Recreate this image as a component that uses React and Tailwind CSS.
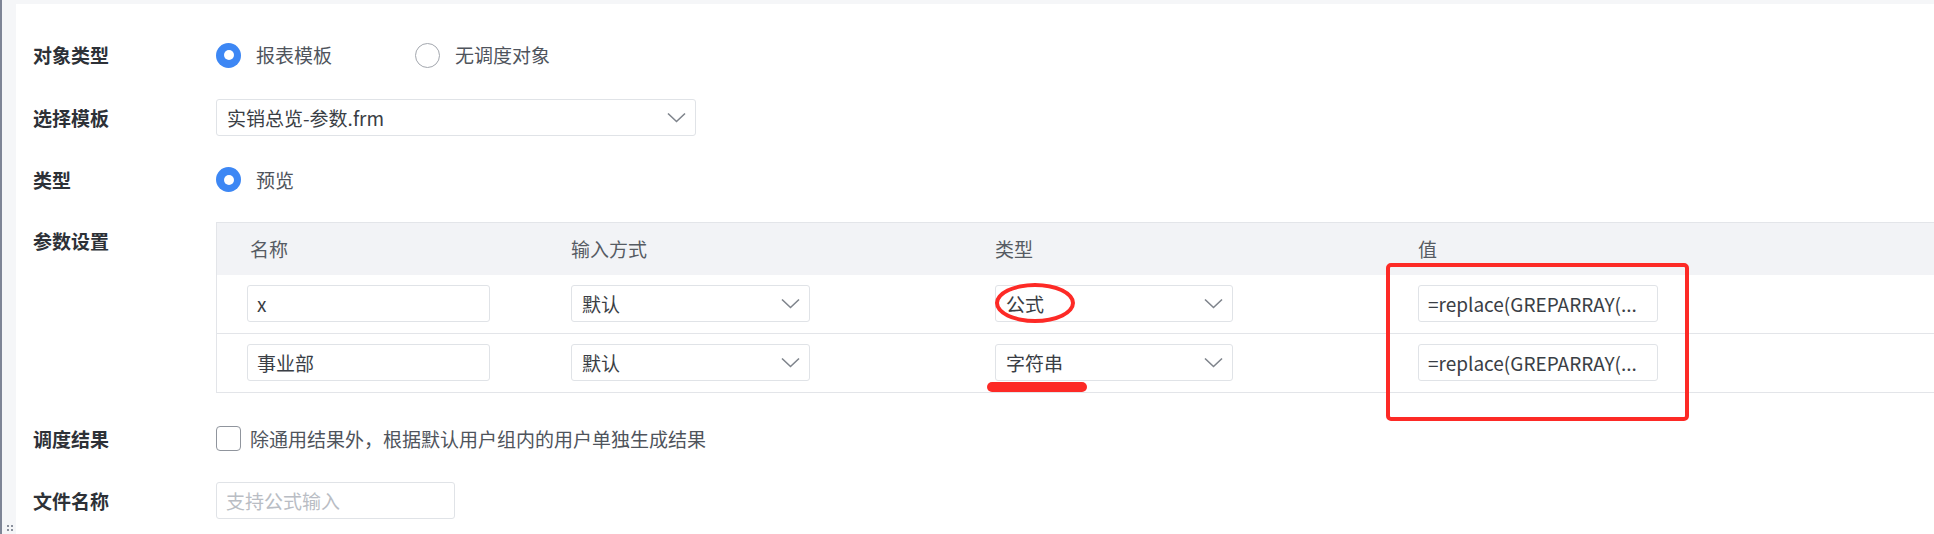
import { useState } from "react"

const font = { fontFamily: '"Noto Sans CJK SC", "Liberation Sans", sans-serif' }

const Chevron = () => (
    <svg width="19" height="11" viewBox="0 0 19 11" fill="none">
        <path d="M1 1.5 L9.5 9.5 L18 1.5" stroke="#7f848c" strokeWidth="1.6" />
    </svg>
)

const Radio = ({ checked, label }) => (
    <div className="flex items-center">
        {
            checked
                ? (
                    <div className="w-[25px] h-[25px] rounded-full bg-[#3d87f4] flex items-center justify-center">
                        <div className="w-[10px] h-[10px] rounded-full bg-white" />
                    </div>
                )
                : <div className="w-[25px] h-[25px] rounded-full border-[1.5px] border-[#a3a7ae] bg-white" />
        }
        <span className="ml-[15px] text-[19px] leading-[24px] text-[#4f545c]">{label}</span>
    </div>
)

const Select = ({ value, className }) => (
    <div className={"h-[37px] border border-[#e0e3e7] rounded-[3px] bg-white flex items-center justify-between pl-[10px] pr-[9px] " + className}>
        <span className="text-[19px] leading-[24px] text-[#3a3e45]">{value}</span>
        <Chevron />
    </div>
)

const Input = ({ value, placeholder, className }) => (
    <div className={"h-[37px] border border-[#e0e3e7] rounded-[3px] bg-white flex items-center px-[9px] " + className}>
        {
            value
                ? <span className="text-[19px] leading-[24px] text-[#3a3e45] whitespace-nowrap">{value}</span>
                : <span className="text-[19px] leading-[24px] text-[#b9bdc4]">{placeholder}</span>
        }
    </div>
)

const Label = ({ children, className }) => (
    <div className={"w-[200px] shrink-0 pl-[17px] text-[19px] leading-[24px] font-semibold text-[#2d3137] " + (className || "")}>
        {children}
    </div>
)

const params = [
    { name: "x", mode: "默认", type: "公式", value: "=replace(GREPARRAY(..." },
    { name: "事业部", mode: "默认", type: "字符串", value: "=replace(GREPARRAY(..." },
]

const ParamTable = () => (
    <div className="relative flex-1 border-l border-t border-[#e3e5e9]">
        <div className="grid grid-cols-[324px_424px_423px_1fr] h-[52px] bg-[#f2f3f6] items-center text-[19px] leading-[24px] text-[#565b63]">
            <div className="pl-[33px]">名称</div>
            <div className="pl-[30px]">输入方式</div>
            <div className="pl-[30px]">类型</div>
            <div className="pl-[30px]">值</div>
        </div>
        {params.map(p => (
            <div key={p.name} className="grid grid-cols-[324px_424px_423px_1fr] h-[59px] pt-[10px] border-b border-[#e3e5e9]">
                <div className="pl-[30px]"><Input value={p.name} className="w-[243px]" /></div>
                <div className="pl-[30px]"><Select value={p.mode} className="w-[239px]" /></div>
                <div className="pl-[30px]"><Select value={p.type} className="w-[238px]" /></div>
                <div className="pl-[30px]"><Input value={p.value} className="w-[240px]" /></div>
            </div>
        ))}

        {/* red annotations */}
        <div className="absolute left-[778px] top-[60px] w-[80px] h-[40px] rounded-[50%] border-[4px] border-[#fd2a26]" />
        <div className="absolute left-[770px] top-[159px] w-[100px] h-[10px] rounded-full bg-[#fd2a26]" />
        <div className="absolute left-[1169px] top-[40px] w-[303px] h-[158px] rounded-[5px] border-[4px] border-[#fd2a26]" />
    </div>
)

export default function App() {
    const [objType] = useState("template")

    return (
        <div style={font} className="w-[1934px] h-[534px] overflow-hidden bg-[#f5f6f8] border-l-2 border-[#7e8596] pt-[4px] pl-[14px] flex relative">
            <div className="flex-1 bg-white flex flex-col pt-[32px]">
                <div className="flex items-center h-[38px]">
                    <Label>对象类型</Label>
                    <div className="flex items-center gap-[83px]">
                        <Radio checked={objType === "template"} label="报表模板" />
                        <Radio checked={objType === "none"} label="无调度对象" />
                    </div>
                </div>

                <div className="flex items-center mt-[25px] h-[37px]">
                    <Label>选择模板</Label>
                    <Select value="实销总览-参数.frm" className="w-[480px]" />
                </div>

                <div className="flex items-center mt-[25px] h-[37px]">
                    <Label>类型</Label>
                    <Radio checked label="预览" />
                </div>

                <div className="flex mt-[24px]">
                    <Label className="pt-[7px]">参数设置</Label>
                    <ParamTable />
                </div>

                <div className="flex items-center mt-[27px] h-[37px]">
                    <Label>调度结果</Label>
                    <div className="flex items-center">
                        <div className="w-[25px] h-[25px] rounded-[4px] border-[1.5px] border-[#90959d] bg-white" />
                        <span className="ml-[9px] text-[19px] leading-[24px] text-[#4f545c]">除通用结果外，根据默认用户组内的用户单独生成结果</span>
                    </div>
                </div>

                <div className="flex items-center mt-[25px] h-[37px]">
                    <Label>文件名称</Label>
                    <Input placeholder="支持公式输入" className="w-[239px]" />
                </div>
            </div>

            <svg className="absolute left-[4px] bottom-[2px]" width="8" height="7" viewBox="0 0 8 7">
                <rect x="1" y="0" width="2" height="2" fill="#8a909c" />
                <rect x="5" y="0" width="2" height="2" fill="#8a909c" />
                <rect x="1" y="4" width="2" height="2" fill="#8a909c" />
                <rect x="5" y="4" width="2" height="2" fill="#8a909c" />
            </svg>
        </div>
    )
}
